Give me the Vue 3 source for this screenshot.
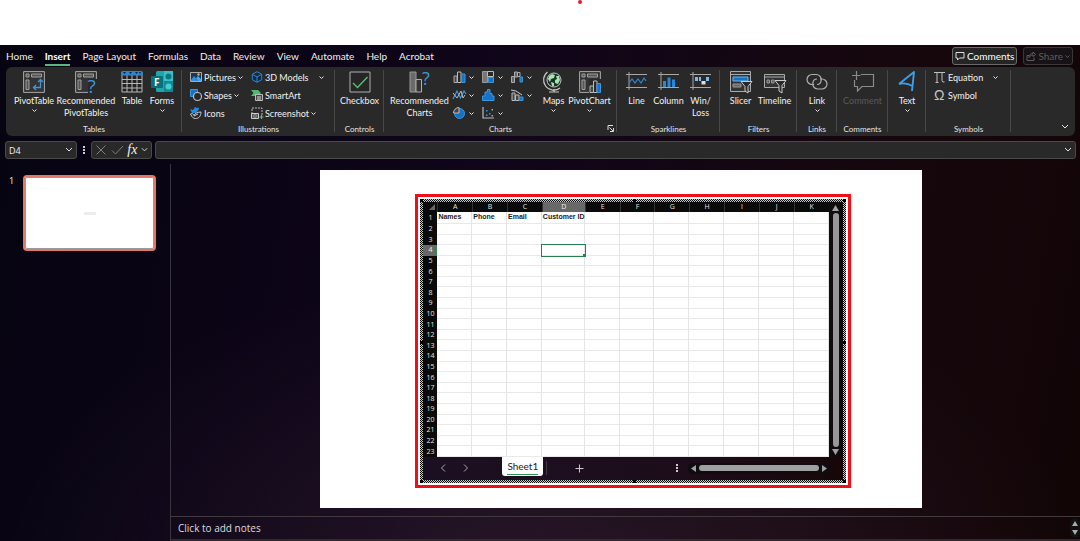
<script setup>
import { ref } from 'vue'

const tabs = ['Home', 'Insert', 'Page Layout', 'Formulas', 'Data', 'Review', 'View', 'Automate', 'Help', 'Acrobat']
const columns = ['A', 'B', 'C', 'D', 'E', 'F', 'G', 'H', 'I', 'J', 'K']
const firstRow = { A: 'Names', B: 'Phone', C: 'Email', D: 'Customer ID' }
const cellName = ref('D4')
const formula = ref('')
const notes = ref('')

const pivotFrame = '<path d="M.6.6h20.8v20.8H.6z" fill="#333" stroke="#a8a8a8"/><path d="M3 3h3v3H3zM8.500 3H18.500v3H8.500zM3 9h3v9.500H3z" fill="#555" stroke="#a0a0a0"/>'
const spark = '<path d="M3 1v18M0 3.500h21M0 16.500h21" fill="none" stroke="#a8a8a8"/>'

const icons = {
  pivot: pivotFrame + '<path d="M10.500 16.500h7V8.500M15 11l2.500-2.500L20 11M13 14l-2.500 2.500L13 19" fill="none" stroke="#3c96dc" stroke-width="1.300"/>',
  recPivot: pivotFrame + '<path d="M13 8h9v14h-9z" fill="#292929"/><text x="12.500" y="22" font-size="19" fill="#3c96dc" font-family="Open Sans, sans-serif">?</text>',
  table: '<path d="M1 1h20v20H1z" fill="#222" stroke="#b8b8b8"/><path d="M6 4v17M11 4v17M16 4v17M1 8.500h20M1 12.500h20M1 17h20" stroke="#b8b8b8"/><path d="M.5.5h21v4H.5z" fill="#2f86cf"/><path d="M2 1h3L3.500 3zM8 1h3L9.500 3zM14 1h3l-1.500 2zM18 1h2l-1 2z" fill="#123"/>',
  forms: '<rect x="5" y="0" width="17" height="21" rx="1.500" fill="#20a4ad"/><path d="M13 0h9v10h-9z" fill="#35c1c9"/><circle cx="17.500" cy="5.500" r="3" fill="#10747c"/><path d="M13 10h9v11h-9z" fill="#158891"/><circle cx="17.500" cy="15.500" r="3" fill="#3fd0d7"/><rect x="0" y="5" width="12" height="12" rx="1" fill="#087078"/><text x="3" y="14.500" font-size="10" font-weight="700" fill="#fff" font-family="Open Sans, sans-serif">F</text>',
  pictures: '<path d="M.5 1.500h11v9H.5z" fill="#163957" stroke="#aaa"/><path d="M1 9l3-4 4 5H1z" fill="#2f90e0"/><path d="M6 7l2-2 3 3v2H8z" fill="#48a4ec"/><circle cx="8.500" cy="3.500" r="1.200" fill="#f0a54a"/>',
  shapes: '<path d="M.5.500h7v7h-7z" fill="#1473c7" stroke="#3c96dc"/><circle cx="7.500" cy="7.500" r="4" fill="#292929" stroke="#c0c0c0" stroke-width="1.200"/>',
  icons: '<path d="M0 2l3 1 2-3 2 1 2-.500L8.500 3 6 6H2z" fill="#2588dc"/><path d="M.5 7c2-1 3 0 3.500 1.500C5 6 8 5 11 5c0 4-2 6.500-5.500 6.500C3 11.500 2 10 .5 7zM4 9l4-2" fill="#292929" stroke="#c8c8c8"/>',
  cube: '<path d="M6 .700l4.700 2.600v5.400L6 11.300 1.300 8.700V3.300zM1.300 3.300L6 6l4.700-2.700M6 6v5.300" fill="#0d2c49" stroke="#2f86cf"/>',
  smartart: '<path d="M0 1h7l3 3-3 3H0l2.500-3z" fill="#4fb96c"/><path d="M4.500 5.500h7v6h-7z" fill="#444" stroke="#bbb"/><path d="M6 8h4M6 10h4" stroke="#ddd"/>',
  screenshot: '<path d="M1 7V1h10v7" fill="none" stroke="#bbb" stroke-dasharray="2 1"/><path d="M.5 6.500h7v5h-7z" fill="#555" stroke="#ccc"/><circle cx="4" cy="9" r="1.300" fill="#222" stroke="#ccc" stroke-width=".7"/><path d="M8.500 10h4M10.500 8v4" stroke="#54c274" stroke-width="1.200"/>',
  checkbox: '<path d="M1 1h20v20H1z" fill="#262626" stroke="#b0b0b0"/><path d="M4 12l4.500 4.500L18.500 6" fill="none" stroke="#5cc07c" stroke-width="1.300"/>',
  recCharts: '<path d="M1 1h6v20H1z" fill="#6a6a6a" stroke="#999"/><path d="M7 8.500h5.500V21H7z" fill="#333" stroke="#b0b0b0"/><text x="13" y="14" font-size="18" fill="#3c96dc" font-family="Open Sans, sans-serif">?</text>',
  column: '<path d="M1 5h3v6.500H1z" fill="#444" stroke="#aaa"/><path d="M4.500 1h3.500v10.500H4.500z" fill="#292929" stroke="#bbb"/><path d="M8.500 3h3.500v8.500H8.500z" fill="#1473c7" stroke="#3c96dc"/>',
  tree: '<path d="M.5.500h5v11h-5z" fill="#777" stroke="#999"/><path d="M5.500.500h6v5h-6z" fill="#292929" stroke="#bbb"/><path d="M6.500 6.500h5v5h-5z" fill="#1473c7" stroke="#3c96dc"/>',
  waterfall: '<path d="M.5 5.500h3v6h-3zM3.500 1h3v5h-3z" fill="#666" stroke="#aaa"/><path d="M6.500 1.500h2.500v4H6.500z" fill="#292929" stroke="#aaa"/><path d="M9 6h2.500v5H9z" fill="#1473c7" stroke="#3c96dc"/>',
  line: '<path d="M0 10l4-8 3.500 7L11 2l2 3" fill="none" stroke="#3c96dc" stroke-width="1.200"/><path d="M0 4l4 5 4-7 2 7 2-3" fill="none" stroke="#bbb"/>',
  histogram: '<path d="M.5 7h2.500V3h2.500V.500H8v4h2V7h2v4.500H.5z" fill="#1473c7" stroke="#3c96dc"/>',
  combo: '<path d="M1 4h3v7.500H1zM4.500 6H8v5.500H4.500z" fill="#444" stroke="#bbb"/><path d="M8.500 8H12v3.500H8.500z" fill="#1473c7" stroke="#3c96dc"/><path d="M0 1l5 1 6 4" fill="none" stroke="#ccc"/>',
  pie: '<circle cx="6.500" cy="6.500" r="5" fill="#1473c7" stroke="#3c96dc"/><path d="M6 6V.500A5.500 5.500 0 0 0 .5 6z" fill="#444" stroke="#bbb"/>',
  scatter: '<path d="M1 0v11h11" fill="none" stroke="#bbb" stroke-width="1.200"/><path d="M4 3h1.500v1.500H4zM7 6h1.500v1.500H7zM4 7.500h1.500V9H4z" fill="#3c96dc"/><path d="M9.500 2H11v1.500H9.500zM9.500 8H11v1.500H9.500z" fill="#aaa"/>',
  maps: '<circle cx="11" cy="9" r="7" fill="#1c3126" stroke="#c8c8c8"/><path d="M6 5l3-2 3 1-1 3-3 1-1 3-2-3zM13 5l3 0 1 4-2 4-3-1 0-3 2-1zM8 11l3 1 0 3-2 0z" fill="#a5e4b4"/><path d="M4.500 1A10 10 0 0 0 17 17M11 18v3M6 21h10" fill="none" stroke="#c8c8c8" stroke-width="1.200"/>',
  pivotChart: pivotFrame + '<path d="M10 8h12v14H10z" fill="#292929"/><path d="M11 15h3.500v6.500H11z" fill="#444" stroke="#bbb"/><path d="M14.500 10h3.500v11.500h-3.500z" fill="#292929" stroke="#bbb"/><path d="M18 12.500h3.500v9H18z" fill="#1473c7" stroke="#3c96dc"/>',
  sparkLine: spark + '<path d="M3 12l3-4 3 4 3-4 3 4 3-5 2 3" fill="none" stroke="#2f86cf" stroke-width="1.200"/>',
  sparkColumn: spark + '<path d="M5 10h3v6H5zM9.500 6.500h3V16h-3zM14 8.500h3V16h-3z" fill="#2588dc"/>',
  winLoss: spark + '<path d="M5 6h3v4H5zM9 6h2v4H9zM16 6h3v4h-3z" fill="#79bdf2"/><path d="M11.500 10h4v3.500h-4z" fill="#ddd"/>',
  slicer: '<path d="M.5.500h20v20H.5z" fill="#333" stroke="#aaa"/><path d="M1 3.500h19" stroke="#aaa"/><path d="M3 6h15v4H3z" fill="#1473c7" stroke="#67b4f2"/><path d="M3 13h8v3H3z" fill="#666" stroke="#999"/><path d="M11 10.500h11l-4 5V22l-3-2v-4.500z" fill="#292929" stroke="#ccc"/>',
  timeline: '<path d="M.5 3.500h20v13H.5z" fill="#333" stroke="#aaa"/><path d="M1 6h19" stroke="#aaa"/><path d="M3 9h2.500v3H3zM7.500 9H10v3H7.500z" fill="#555" stroke="#999"/><path d="M11 9.500h11l-4 5V22l-3-2v-5.500z" fill="#292929" stroke="#ccc"/>',
  link: '<path d="M8 13.500H6A5 5 0 0 1 6 3.500h4.500a5 5 0 0 1 4.500 6.500 4 4 0 0 1-4 3.500" fill="none" stroke="#b0b0b0" stroke-width="1.200"/><path d="M14 8h2a5 5 0 0 1 0 10h-4.500A5 5 0 0 1 7 11.500 4 4 0 0 1 11 8" fill="none" stroke="#b0b0b0" stroke-width="1.200"/>',
  comment: '<path d="M9 3.500h12.500v12H10L5.500 20v-4.500h-3V9M0 4.500h8.500M4.500 0v9" fill="none" stroke="#8a8a8a" stroke-width="1.200"/>',
  text: '<path d="M3 13L18 1L16 20M3 13Q10 11 16.500 15" fill="none" stroke="#3c9fe8" stroke-width="1.900" stroke-linejoin="round"/>',
  equation: '<path d="M0 1.500h11M3 1.500v10M8 1.500v8q0 2 2.500 1.500M1.500 11.500h3" fill="none" stroke="#c0c0c0"/>',
  omega: '<text x="0" y="11" font-size="14" fill="#c8c8c8" font-family="Liberation Sans, sans-serif">Ω</text>',
}

const big = (icon, label, w, more = {}) => ({ type: 'big', icon, label, w, ...more })
const groups = [
  { label: 'Tables', cls: 'tight', items: [
    big('pivot', 'PivotTable', 'w44', { chev: true }),
    big('recPivot', 'Recommended PivotTables', 'w60'),
    big('table', 'Table', 'w32'),
    big('forms', 'Forms', 'w28', { chev: true }),
  ] },
  { label: 'Illustrations', cls: 'pad', items: [
    { type: 'rows', rows: [['pictures', 'Pictures', 1], ['shapes', 'Shapes', 1], ['icons', 'Icons', 0]] },
    { type: 'rows', rows: [['cube', '3D Models', 2], ['smartart', 'SmartArt', 0], ['screenshot', 'Screenshot', 1]] },
  ] },
  { label: 'Controls', cls: 'center', items: [big('checkbox', 'Checkbox', 'w44')] },
  { label: 'Charts', cls: 'center', launcher: true, items: [
    big('recCharts', 'Recommended Charts', 'w60'),
    { type: 'minis', minis: ['column', 'tree', 'waterfall', 'line', 'histogram', 'combo', 'pie', 'scatter'] },
    big('maps', 'Maps', 'w28', { chev: true }),
    big('pivotChart', 'PivotChart', 'w44', { chev: true }),
  ] },
  { label: 'Sparklines', cls: 'center', items: [big('sparkLine', 'Line', 'w32'), big('sparkColumn', 'Column', 'w32'), big('winLoss', 'Win/ Loss', 'w32')] },
  { label: 'Filters', cls: 'center', items: [big('slicer', 'Slicer', 'w32'), big('timeline', 'Timeline', 'w36')] },
  { label: 'Links', cls: 'center', items: [big('link', 'Link', 'w32', { chev: true })] },
  { label: 'Comments', cls: 'center', items: [big('comment', 'Comment', 'w44', { disabled: true })] },
  { label: '', cls: 'center', items: [big('text', 'Text', 'w32', { chev: true })] },
  { label: 'Symbols', cls: 'pad', items: [{ type: 'rows', rows: [['equation', 'Equation', 2], ['omega', 'Symbol', 0]] }] },
]
</script>

<template>
  <div class="page">
    <div class="top"><span class="dot"></span></div>
    <div class="app">
      <header class="tabbar">
        <nav class="tabs">
          <a v-for="t in tabs" :key="t" href="#" :class="{ active: t === 'Insert' }">{{ t }}</a>
        </nav>
        <button class="action">
          <svg width="10" height="10" viewBox="0 0 10 10"><path d="M1 1.500h8v5.500H4.500L2.500 9V7H1z" fill="none" stroke="#ddd" /></svg>
          Comments
        </button>
        <button class="action share" disabled>
          <svg width="10" height="10" viewBox="0 0 10 10"><path d="M3 4.500H1v5h7v-3M3 6.500c0-3 2-4 4-4V1l2.500 2.500L7 5.500V4C5 4 4 5 3 6.500z" fill="none" stroke="currentColor" /></svg>
          Share
          <svg class="chev" viewBox="0 0 5 5"><path d="M.5 1.500l2 2 2-2" /></svg>
        </button>
      </header>

      <div class="ribbon">
        <section v-for="(g, gi) in groups" :key="gi" class="group">
          <div class="items" :class="g.cls">
            <template v-for="(it, i) in g.items" :key="i">
              <button v-if="it.type === 'big'" class="big" :class="it.w" :disabled="it.disabled">
                <svg width="22" height="22" viewBox="0 0 22 22" v-html="icons[it.icon]"></svg>
                <span>{{ it.label }}</span>
                <svg v-if="it.chev" class="chev" viewBox="0 0 5 5"><path d="M.5 1.500l2 2 2-2" /></svg>
              </button>
              <div v-else-if="it.type === 'rows'" class="rows">
                <button v-for="r in it.rows" :key="r[1]" class="row">
                  <svg width="12" height="12" viewBox="0 0 12 12" v-html="icons[r[0]]"></svg>
                  <span>{{ r[1] }}</span>
                  <svg v-if="r[2]" class="chev" :class="{ far: r[2] === 2 }" viewBox="0 0 5 5"><path d="M.5 1.500l2 2 2-2" /></svg>
                </button>
              </div>
              <div v-else class="minis">
                <button v-for="m in it.minis" :key="m" class="mini" :aria-label="m">
                  <svg width="13" height="12" viewBox="0 0 13 12" v-html="icons[m]"></svg>
                  <svg class="chev" viewBox="0 0 5 5"><path d="M.5 1.500l2 2 2-2" /></svg>
                </button>
              </div>
            </template>
          </div>
          <div class="caption">{{ g.label }}</div>
          <button v-if="g.launcher" class="launcher" aria-label="Chart options">
            <svg width="7" height="7" viewBox="0 0 7 7"><path d="M1 5V.500h5M2.500 2.500L6 6M6.500 3v3.500H3" fill="none" stroke="#ddd" /></svg>
          </button>
        </section>
        <div class="rest">
          <button aria-label="Collapse ribbon"><svg class="arrow" viewBox="0 0 8 6"><path d="M1 1l3 3 3-3" /></svg></button>
        </div>
      </div>

      <div class="formula">
        <div class="box name">
          <input v-model="cellName" aria-label="Name box" />
          <svg class="arrow" viewBox="0 0 8 6"><path d="M1 1l3 3 3-3" /></svg>
        </div>
        <span class="dots"><i></i><i></i><i></i></span>
        <div class="box tools">
          <button aria-label="Cancel"><svg width="12" height="12" viewBox="0 0 12 12"><path d="M1.500 1.500l9 9M10.500 1.500l-9 9" fill="none" stroke="#7d7d7d" /></svg></button>
          <button aria-label="Enter"><svg width="13" height="12" viewBox="0 0 13 12"><path d="M1 6.500L4.500 10 12 2" fill="none" stroke="#7d7d7d" /></svg></button>
          <button class="fx">fx</button>
          <svg class="arrow" viewBox="0 0 8 6"><path d="M1 1l3 3 3-3" /></svg>
        </div>
        <div class="box entry">
          <input v-model="formula" aria-label="Formula" />
          <svg class="arrow" viewBox="0 0 8 6"><path d="M1 1l3 3 3-3" /></svg>
        </div>
      </div>

      <main class="body">
        <aside class="thumbs">
          <span class="num">1</span>
          <button class="thumb" aria-label="Slide 1"><i></i></button>
        </aside>
        <div class="editor">
          <div class="stage">
            <div class="slide">
              <div class="object">
                <div class="hatch">
                  <b class="h tl"></b><b class="h tc"></b><b class="h tr"></b><b class="h ml"></b><b class="h mr"></b><b class="h bl"></b><b class="h bc"></b><b class="h br"></b>
                  <div class="book">
                    <div class="grid">
                      <table>
                        <colgroup><col class="c0" /><col v-for="c in columns" :key="c" :class="{ wide: c === 'D' }" /></colgroup>
                        <thead>
                          <tr>
                            <th class="corner"><svg width="7" height="6" viewBox="0 0 7 6"><path d="M6 0v6H0z" fill="#666" /></svg></th>
                            <th v-for="c in columns" :key="c" :class="{ on: c === 'D' }">{{ c }}</th>
                          </tr>
                        </thead>
                        <tbody>
                          <tr v-for="r in 23" :key="r">
                            <th :class="{ on: r === 4 }">{{ r }}</th>
                            <td v-for="c in columns" :key="c" :class="{ sel: r === 4 && c === 'D' }">{{ r === 1 ? firstRow[c] : '' }}<i v-if="r === 4 && c === 'D'" class="fill"></i></td>
                          </tr>
                        </tbody>
                      </table>
                      <div class="vbar">
                        <svg width="7" height="6" viewBox="0 0 7 6"><path d="M3.500 0L7 6H0z" fill="#a0a0a0" /></svg>
                        <i></i>
                        <svg width="7" height="6" viewBox="0 0 7 6"><path d="M0 0h7L3.500 6z" fill="#a0a0a0" /></svg>
                      </div>
                    </div>
                    <div class="sheets">
                      <button class="nav" aria-label="Previous sheet"><svg width="6" height="8" viewBox="0 0 6 8"><path d="M5 .500L1.500 4 5 7.500" fill="none" stroke="#aaa" /></svg></button>
                      <button class="nav" aria-label="Next sheet"><svg width="6" height="8" viewBox="0 0 6 8"><path d="M1 .500L4.500 4 1 7.500" fill="none" stroke="#aaa" /></svg></button>
                      <button class="sheet"><span>Sheet1</span></button>
                      <span class="sep"></span>
                      <button class="plus" aria-label="New sheet"><svg width="9" height="9" viewBox="0 0 9 9"><path d="M4.500.500v8M.5 4.500h8" stroke="#ccc" /></svg></button>
                      <span class="dots"><i></i><i></i><i></i></span>
                      <div class="hbar">
                        <svg width="5" height="7" viewBox="0 0 5 7"><path d="M5 0v7L0 3.500z" fill="#a0a0a0" /></svg>
                        <i></i>
                        <svg width="5" height="7" viewBox="0 0 5 7"><path d="M0 0l5 3.500L0 7z" fill="#a0a0a0" /></svg>
                      </div>
                    </div>
                  </div>
                </div>
              </div>
            </div>
          </div>
          <div class="notes">
            <input v-model="notes" placeholder="Click to add notes" aria-label="Notes" />
            <div class="spin">
              <svg width="6" height="5" viewBox="0 0 6 5"><path d="M3 0l3 5H0z" fill="#aaa" /></svg>
              <svg width="6" height="5" viewBox="0 0 6 5"><path d="M0 0h6L3 5z" fill="#aaa" /></svg>
            </div>
          </div>
        </div>
      </main>
    </div>
  </div>
</template>

<style>
body { margin: 0; background: #fff; }
</style>

<style scoped>
* { box-sizing: border-box; }
button, input { font: inherit; color: inherit; background: none; border: 0; padding: 0; margin: 0; outline: 0; }
button { display: flex; align-items: center; }
svg { display: block; flex: none; overflow: visible; }
.page { min-height: 100vh; display: flex; flex-direction: column; font-family: "Open Sans", "Noto Sans", sans-serif; font-size: 9px; color: #f2f2f2; }
.top { height: 45px; display: flex; justify-content: center; padding-left: 79px; }
.dot { width: 4px; height: 4px; border-radius: 2px; background: #ed1c24; }
.app {
  flex: 1; display: flex; flex-direction: column;
  background:
    radial-gradient(ellipse 50% 60% at 50% 105%, rgba(52, 32, 48, .6), transparent),
    linear-gradient(100deg, #070412 0%, #0b0416 25%, #10051a 45%, #16070e 75%, #120506 100%);
}
.tabbar, .ribbon { font-family: Lato, "Open Sans", sans-serif; }
.tabbar { display: flex; align-items: center; height: 22px; padding: 0 7px 0 6px; }
.tabs { flex: 1; display: flex; gap: 12px; font-size: 10px; line-height: 16px; }
.tabs a { color: #f0f0f0; text-decoration: none; border-bottom: 2px solid transparent; white-space: nowrap; padding-top: 2px; }
.tabs a.active { font-weight: 700; color: #fff; border-color: #58b87c; }
.action { height: 18px; gap: 2px; padding: 0 2px; font-size: 10px; border: 1px solid #6b6b6b; border-radius: 3px; background: #252525; color: #fff; }
.share { margin-left: 6px; border-color: #383838; background: #171216; color: #5d5d5d; }
.chev { width: 5px; height: 5px; }
.chev path, .arrow path { fill: none; stroke: #e4e4e4; stroke-width: 1px; }
.share .chev path { stroke: #5d5d5d; }
.arrow { width: 8px; height: 6px; }

.ribbon {
  display: grid; margin: 0 5px 0 6px; height: 69px; background: #292929; border-radius: 6px; padding-top: 3px;
  grid-template-columns: minmax(0, 176fr) minmax(0, 153fr) minmax(0, 49fr) minmax(0, 233fr) minmax(0, 103fr) minmax(0, 77fr) minmax(0, 40fr) minmax(0, 51fr) minmax(0, 38fr) minmax(0, 85fr) minmax(0, 64fr);
}
.group { position: relative; display: flex; flex-direction: column; justify-content: space-between; height: 65px; }
.group::after { content: ""; position: absolute; right: 0; top: 0; bottom: 3px; width: 1px; background: #484848; }
.items { display: flex; align-items: flex-start; }
.items.tight { padding-left: 6px; }
.items.pad { padding-left: 8px; }
.items.center { justify-content: center; }
.big { flex: none; flex-direction: column; text-align: center; line-height: 12px; padding-top: 1px; }
.big span { margin-top: 2px; }
.big .chev { margin-top: 1px; }
.big:disabled { color: #5a5a5a; }
.w28 { width: 28px; } .w32 { width: 32px; } .w36 { width: 36px; } .w44 { width: 44px; } .w60 { width: 60px; }
.rows { width: 61px; }
.rows + .rows { width: 76px; }
.row { height: 18px; gap: 2px; white-space: nowrap; }
.rows, .minis { margin-top: -2px; }
.far { margin-left: 8px; }
.minis { display: grid; grid-template-columns: repeat(3, 29px); padding-left: 3px; }
.mini { height: 18px; gap: 3px; }
.caption { text-align: center; font-size: 8px; line-height: 11px; color: #e4e4e4; }
.launcher { position: absolute; right: 3px; bottom: 3px; }
.rest { display: flex; justify-content: flex-end; align-items: flex-end; padding: 0 6px 6px 0; }

.formula { display: flex; align-items: center; height: 28px; padding: 0 4px 0 5px; }
.box { display: flex; align-items: center; height: 18px; background: #292929; border: 1px solid #4a4a4a; border-radius: 3px; padding: 0 3px; }
.box input { flex: 1; min-width: 0; }
.name { width: 72px; }
.dots { display: flex; flex-direction: column; gap: 1px; margin: 0 6px; }
.dots i { width: 2px; height: 2px; background: #ccc; }
.tools { width: 61px; justify-content: space-between; }
.fx { font: italic 14px/14px "Liberation Serif", serif; }
.tools .arrow { width: 7px; }
.entry { flex: 1; margin-left: 3px; }

.body { flex: 1; display: flex; }
.thumbs { width: 171px; display: flex; align-items: flex-start; padding: 11px 14px 0 9px; border-right: 1px solid #39343d; }
.num { width: 14px; font-size: 9px; line-height: 12px; }
.thumb { flex: 1; aspect-ratio: 133 / 76; justify-content: center; border: 2px solid #e27766; border-radius: 4px; background: #fff; box-shadow: inset 0 0 0 1px #9a9a9a; }
.thumb i { width: 12px; height: 3px; background: #ededed; }
.editor { flex: 1; display: flex; flex-direction: column; min-width: 0; }
.stage { flex: 1; display: flex; justify-content: center; align-items: flex-start; padding: 6px 9px 8px 0; }
.slide { width: 66.8%; aspect-ratio: 16 / 9; background: #fff; display: flex; padding: 24px 71px 20px 95px; }
.object { flex: 1; display: flex; border: 3px solid #ed1019; padding: 2px; }
.hatch { position: relative; flex: 1; display: flex; padding: 3px; background: repeating-conic-gradient(#0a0a0a 0 25%, #ccc 0 50%) 0 0 / 2px 2px; }
.h { position: absolute; width: 3px; height: 3px; background: #000; }
.tl, .tc, .tr { top: 0; } .bl, .bc, .br { bottom: 0; }
.tl, .ml, .bl { left: 0; } .tr, .mr, .br { right: 0; }
.tc, .bc { left: 50%; } .ml, .mr { top: 50%; }
.book { flex: 1; display: flex; flex-direction: column; background: linear-gradient(90deg, #1b1022, #1d0d1b 60%, #180709); }
.grid { flex: 1; display: flex; }
table { flex: 1; table-layout: fixed; border-collapse: separate; border-spacing: 0; background: #fff; width: 100%; height: 255px; }
thead tr { height: 10px; }
.c0 { width: 14px; } .wide { width: 43px; }
th, td { padding: 0; font-size: 7px; line-height: 8px; white-space: nowrap; }
th { font-weight: 400; background: #0b0b0b; color: #e0e0e0; text-align: center; border-left: 1px solid #333; }
tbody th { border-left: 0; }
th.corner { border: 0; }
.corner svg { margin: 0 1px 0 auto; }
th.on { background: #686868; color: #f0f0f0; }
thead th.on { box-shadow: inset 0 -1px #2c8a55; }
tbody th.on { box-shadow: inset -1px 0 #2c8a55; }
td { border-right: 1px solid #e4e4e4; border-bottom: 1px solid #e9e9e9; color: #1a1a1a; font-family: "Liberation Sans", Arial, sans-serif; font-weight: 700; padding-left: 1px; }
td.sel { position: relative; outline: 1px solid #2a7d50; }
.fill { position: absolute; right: -2px; bottom: -2px; width: 3px; height: 3px; background: #2a7d50; }
.vbar { width: 14px; display: flex; flex-direction: column; align-items: center; gap: 2px; padding: 3px 0 2px; background: #100b0e; }
.vbar i { flex: 1; width: 6px; border-radius: 3px; background: #989898; }
.sheets { height: 23px; display: flex; align-items: center; padding: 0 13px 1px 0; }
.nav { margin-left: 17px; }
.sheet { align-self: flex-start; height: 19px; margin-left: 33px; padding: 0 5px; background: #fff; color: #222; border-radius: 0 0 3px 3px; font-family: Lato, "Open Sans", sans-serif; font-size: 10px; }
.sheet span { line-height: 15px; border-bottom: 1px solid #2a9455; }
.sep { width: 1px; height: 14px; margin-left: 3px; background: #413545; }
.plus { margin: 0 auto 0 28px; }
.hbar { display: flex; align-items: center; gap: 3px; width: 142px; height: 11px; margin-left: 4px; padding: 0 3px; border-radius: 5px; background: #100b0e; }
.hbar i { flex: 1; height: 6px; border-radius: 3px; background: #a0a0a0; }
.notes { display: flex; align-items: center; height: 25px; border-top: 1px solid #403a3f; border-bottom: 2px solid #302a2e; padding-left: 7px; }
.notes input { flex: 1; font-size: 10px; }
.notes input::placeholder { color: #dcdcdc; opacity: 1; }
.spin { display: flex; flex-direction: column; align-items: center; justify-content: space-between; width: 10px; height: 20px; padding: 3px 0; background: #111; border-radius: 5px; }
</style>
